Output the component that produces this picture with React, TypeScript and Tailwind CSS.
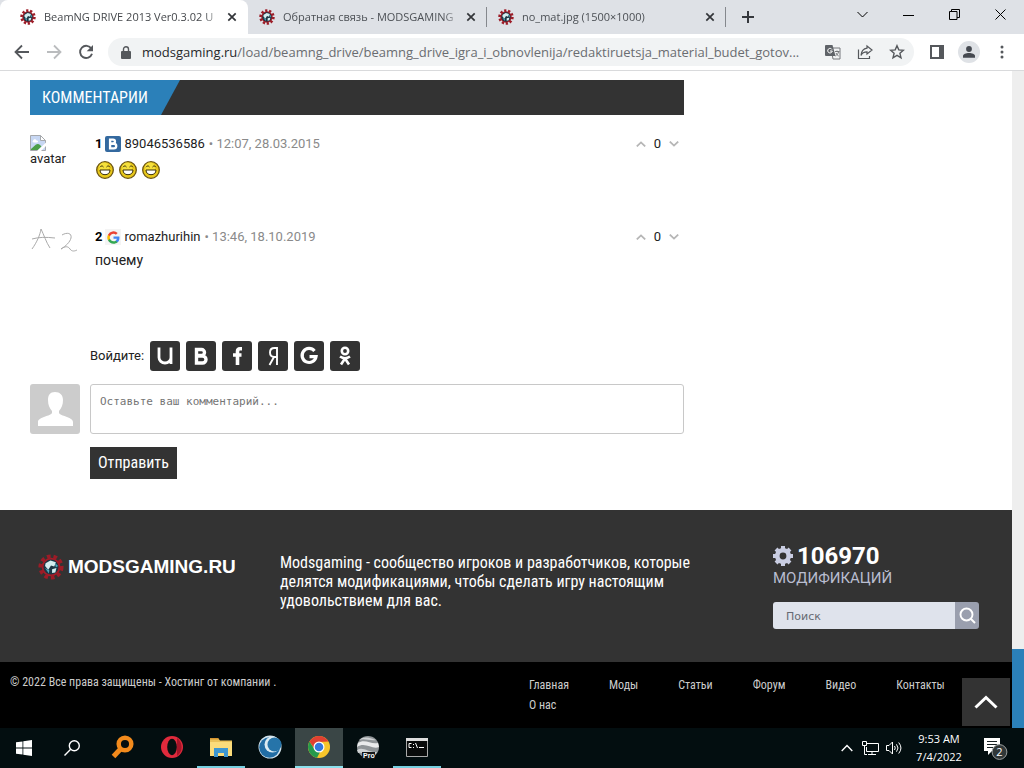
import type { ReactNode } from "react";

const condensed = "font-['Roboto_Condensed','Liberation_Sans_Narrow',sans-serif]";
const chromeFont = "font-['Open_Sans','Noto_Sans',sans-serif]";

function GearGlobe({ className }: { className: string }) {
  return (
    <svg viewBox="0 0 24 24" className={className} aria-hidden="true">
      <circle cx="12" cy="12" r="8.600" fill="#a51d29" />
      <circle cx="12" cy="12" r="9.600" fill="none" stroke="#9c1c27" strokeWidth="4" strokeDasharray="3.300 2.600" />
      <circle cx="12" cy="12" r="7" fill="#1c3644" />
      <path d="M7 8.500 11.500 6l5 1.500-1.500 4L12 10.500l-2.500 4L6.500 11zM13 14l4-1-1 4-3 .5z" fill="#d4eef0" />
      <path d="M6.500 13l4 2-.5 3zM15.500 8l3 3-2 1.500z" fill="#4aa6bb" />
    </svg>
  );
}

function CloseIcon({ className }: { className: string }) {
  return (
    <svg viewBox="0 0 10 10" className={className} aria-hidden="true">
      <path d="M1.300 1.300 8.700 8.700M8.700 1.300 1.300 8.700" stroke="currentColor" strokeWidth="1.700" />
    </svg>
  );
}

function Tab({ title, active = false }: { title: string; active?: boolean }) {
  return (
    <div
      className={
        active
          ? "flex h-[34px] w-[248px] shrink-0 items-center rounded-t-lg bg-white pr-[10px] pl-5 text-[#45484c]"
          : "flex h-[34px] w-[238px] shrink-0 items-center pr-[9px] pl-[11px] text-[#4c5055]"
      }
    >
      <GearGlobe className="size-4 shrink-0" />
      <span className="ml-2 min-w-0 flex-1 overflow-hidden text-[11px] leading-4 whitespace-nowrap [mask-image:linear-gradient(to_right,black_90%,transparent)]">
        {title}
      </span>
      <button aria-label="Закрыть вкладку" className="ml-1 shrink-0 p-[1px] text-[#333539]">
        <CloseIcon className="size-[10px]" />
      </button>
    </div>
  );
}

function BrowserBar() {
  return (
    <header className={`${chromeFont} shrink-0`}>
      <div className="flex h-[34px] items-center bg-[#dee1e6]">
        <div className="flex min-w-0 items-center overflow-hidden">
          <Tab title="BeamNG DRIVE 2013 Ver0.3.02 U" active />
          <Tab title="Обратная связь - MODSGAMING" />
          <span className="h-5 w-px shrink-0 bg-[#85888d]" />
          <Tab title="no_mat.jpg (1500×1000)" />
          <span className="h-5 w-px shrink-0 bg-[#85888d]" />
        </div>
        <button aria-label="Новая вкладка" className="ml-4 text-[#35383d]">
          <svg viewBox="0 0 12 12" className="size-3">
            <path d="M6 0v12M0 6h12" stroke="currentColor" strokeWidth="2" />
          </svg>
        </button>
        <div className="mr-[18px] mb-[6px] ml-auto flex items-center gap-[35px] text-black">
          <button aria-label="Поиск вкладок">
            <svg viewBox="0 0 11 11" className="size-[11px]">
              <path d="m.5 3 5 5 5-5" fill="none" stroke="currentColor" />
            </svg>
          </button>
          <button aria-label="Свернуть">
            <svg viewBox="0 0 11 11" className="size-[11px]">
              <path d="M0 6.500h11" stroke="currentColor" />
            </svg>
          </button>
          <button aria-label="Восстановить">
            <svg viewBox="0 0 11 11" className="size-[11px]">
              <path d="M.5 2.500h7.500v8H.5zM2.500 2.500v-2h8v8H8" fill="none" stroke="currentColor" />
            </svg>
          </button>
          <button aria-label="Закрыть">
            <svg viewBox="0 0 11 11" className="size-[11px]">
              <path d="m.5.5 10 10M10.500.5l-10 10" stroke="currentColor" />
            </svg>
          </button>
        </div>
      </div>

      <div className="flex h-[37px] items-center border-b border-[#d9dadc] bg-white pr-5 pl-[14px] text-[#55585c]">
        <button aria-label="Назад" className="mr-4">
          <svg viewBox="0 0 16 16" className="size-4">
            <path d="M15 8H2M8 1.500 1.500 8 8 14.500" fill="none" stroke="currentColor" strokeWidth="1.800" />
          </svg>
        </button>
        <button aria-label="Вперёд" className="mr-4 text-[#babcbe]">
          <svg viewBox="0 0 16 16" className="size-4">
            <path d="M1 8h13M8 1.500 14.500 8 8 14.500" fill="none" stroke="currentColor" strokeWidth="1.800" />
          </svg>
        </button>
        <button aria-label="Обновить" className="mr-[14px]">
          <svg viewBox="0 0 16 16" className="size-4">
            <path d="M13.400 4.700A6.100 6.100 0 1 0 14 9.800" fill="none" stroke="currentColor" strokeWidth="1.900" />
            <path d="M15 1v6.300H8.700z" fill="currentColor" />
          </svg>
        </button>
        <div className="flex h-7 min-w-0 flex-1 items-center rounded-full bg-[#f1f3f4] pr-[9px] pl-[13px]">
          <svg viewBox="0 0 10 13" className="h-[13px] w-[10px] shrink-0" fill="currentColor" aria-hidden="true">
            <path d="M1 5h8a1 1 0 0 1 1 1v6a1 1 0 0 1-1 1H1a1 1 0 0 1-1-1V6a1 1 0 0 1 1-1z" />
            <path d="M2.500 5.500V3.200a2.500 2.500 0 0 1 5 0v2.300" fill="none" stroke="currentColor" strokeWidth="1.400" />
          </svg>
          <span className="ml-[11px] min-w-0 flex-1 truncate text-[13px] leading-5 text-[#6a6d71]">
            <span className="text-[#26282b]">modsgaming.ru</span>
            /load/beamng_drive/beamng_drive_igra_i_obnovlenija/redaktiruetsja_material_budet_gotov...
          </span>
          <div className="ml-1 flex shrink-0 items-center gap-4">
            <button aria-label="Перевести страницу">
              <svg viewBox="0 0 16 16" className="size-4">
                <path d="M6 4h9v11H8z" fill="none" stroke="#77797c" />
                <path d="M1 1h6.500l3 11H1a1 1 0 0 1-1-1V2a1 1 0 0 1 1-1z" fill="#5f6368" />
                <path d="M7 5.500A2.300 2.300 0 1 0 7.300 7H5" fill="none" stroke="#fff" />
                <path d="M10 7.500h4.500M12 6.500v1M13.500 8c-.5 2-1.800 3-3 4M11 9c.5 1.400 1.500 2.300 2.700 3" fill="none" stroke="#77797c" />
              </svg>
            </button>
            <button aria-label="Поделиться">
              <svg viewBox="0 0 16 16" className="size-4" fill="none" stroke="currentColor" strokeWidth="1.200">
                <path d="M1.500 5.500v9h11V12" />
                <path d="M10 2l5 4-5 4V7.800C7 7.800 5 9 4 11.500 4.300 7.500 6.500 4.700 10 4.200z" />
              </svg>
            </button>
            <button aria-label="Добавить в закладки">
              <svg viewBox="0 0 16 16" className="size-4" fill="none" stroke="currentColor" strokeWidth="1.400">
                <path d="m8 1.700 1.800 4.200 4.600.4-3.500 3 1.100 4.500L8 11.400l-4 2.400 1.100-4.500-3.500-3 4.600-.4z" />
              </svg>
            </button>
          </div>
        </div>
        <div className="ml-4 flex shrink-0 items-center">
          <button aria-label="Боковая панель">
            <svg viewBox="0 0 14 14" className="size-[14px]">
              <path d="M1 1h12v12H1z" fill="none" stroke="currentColor" strokeWidth="2" />
              <path d="M9 0h5v14H9z" fill="currentColor" />
            </svg>
          </button>
          <button aria-label="Профиль" className="ml-[14px] flex size-[22px] items-center justify-center rounded-full bg-[#dfe2e6]">
            <svg viewBox="0 0 12 12" className="size-3" fill="#454950">
              <circle cx="6" cy="3" r="2.900" />
              <path d="M0 11.800V10c0-2 3-3 6-3s6 1 6 3v1.800z" />
            </svg>
          </button>
          <button aria-label="Меню" className="ml-[20px]">
            <svg viewBox="0 0 4 14" className="h-[14px] w-1" fill="currentColor">
              <circle cx="2" cy="2" r="1.500" />
              <circle cx="2" cy="7" r="1.500" />
              <circle cx="2" cy="12" r="1.500" />
            </svg>
          </button>
        </div>
      </div>
    </header>
  );
}

function GoogleLogo({ className }: { className: string }) {
  return (
    <svg viewBox="0 0 24 24" className={className} aria-hidden="true">
      <path fill="#4285f4" d="M23 12.300c0-.8-.1-1.600-.2-2.300H12v4.500h6.200a5.300 5.300 0 0 1-2.300 3.500v2.900h3.700c2.200-2 3.400-5 3.400-8.600z" />
      <path fill="#34a853" d="M12 23.500c3.100 0 5.700-1 7.600-2.800l-3.700-2.900c-1 .7-2.300 1.100-3.900 1.100-3 0-5.500-2-6.400-4.700H1.800v3A11.500 11.500 0 0 0 12 23.500z" />
      <path fill="#fbbc05" d="M5.600 14.200a6.900 6.900 0 0 1 0-4.400v-3H1.800a11.500 11.500 0 0 0 0 10.400z" />
      <path fill="#ea4335" d="M12 5.100c1.700 0 3.200.6 4.400 1.700l3.300-3.300A11.500 11.500 0 0 0 1.800 6.800l3.800 3C6.500 7.100 9 5.100 12 5.100z" />
    </svg>
  );
}

function Smiley() {
  return (
    <svg viewBox="0 0 18 18" className="size-[18px]" role="img" aria-label="smile">
      <circle cx="9" cy="9" r="8.300" fill="#e8c81a" stroke="#6b5410" strokeWidth="1.300" />
      <circle cx="8" cy="6.500" r="5" fill="#fbe94c" opacity=".7" />
      <path d="M4 6.200C5 4.600 6.500 4.600 7.500 6M10.500 6c1-1.400 2.500-1.400 3.500.2" fill="none" stroke="#3b300a" />
      <path d="M4 9h10c0 3-2 4.700-5 4.700S4 12 4 9z" fill="#fff" stroke="#3b300a" />
    </svg>
  );
}

function Votes() {
  return (
    <div className="flex shrink-0 items-center gap-2 pr-[5px] text-[13px] leading-5 text-[#222]">
      <button aria-label="Нравится" className="text-[#b6b6b6]">
        <svg viewBox="0 0 10 6" className="h-[6px] w-[10px]"><path d="m.8 5.400 4.200-4 4.200 4" fill="none" stroke="currentColor" strokeWidth="1.800" /></svg>
      </button>
      <span>0</span>
      <button aria-label="Не нравится" className="text-[#b6b6b6]">
        <svg viewBox="0 0 10 6" className="h-[6px] w-[10px]"><path d="m.8.6 4.200 4 4.200-4" fill="none" stroke="currentColor" strokeWidth="1.800" /></svg>
      </button>
    </div>
  );
}

type CommentProps = { index: number; badge: ReactNode; name: string; date: string; avatar: ReactNode; children: ReactNode };

function Comment({ index, badge, name, date, avatar, children }: CommentProps) {
  return (
    <article className="flex h-[93px] items-start">
      <div className="w-[65px] shrink-0">{avatar}</div>
      <div className="min-w-0 flex-1">
        <div className="flex items-center text-[13px] leading-5">
          <b className="font-bold text-black">{index}</b>
          <span className="mx-[3px]">{badge}</span>
          <a href="#user" className="text-[#1d1d1d]">{name}</a>
          <span className="ml-1 text-[#8a8a8a]">• {date}</span>
        </div>
        {children}
      </div>
      <Votes />
    </article>
  );
}

const socials: { name: string; icon: ReactNode }[] = [
  { name: "uID", icon: <path d="M6 3.500v10a6 5.500 0 0 0 12 0v-10M18 12v8" strokeWidth="2.800" /> },
  { name: "ВКонтакте", icon: <path d="M7.500 5.500h5a3 3 0 0 1 0 6h-5zM7.500 12h6a3.500 3.500 0 0 1 0 7h-6z" strokeWidth="3.400" /> },
  { name: "Facebook", icon: <path d="M17 4.700h-2q-2.500 0-2.500 2.800v13.500M8 11h8.500" strokeWidth="3.600" /> },
  { name: "Яндекс", icon: <path d="M16 21V4h-2.500c-3 0-4.500 1.700-4.500 4.500s1.600 4.500 4.500 4.500H16M13 13l-4.500 8" strokeWidth="1.900" /> },
  { name: "Google", icon: <path d="M17.500 7A7 7 0 1 0 19 12.700h-6.500" strokeWidth="3.200" /> },
  {
    name: "Одноклассники",
    icon: (
      <>
        <circle cx="12" cy="7" r="3.200" />
        <path d="M7 12.500q5 3.500 10 0M12 14.500l-4 6M12 14.500l4 6" />
      </>
    ),
  },
];

function Comments() {
  return (
    <main className="flex-1 px-[30px] pt-[9px] pb-[31px] font-['Roboto',sans-serif]">
      <div className="max-w-[654px]">
        <div className="bg-[#333]">
          <h2 className={`${condensed} h-[35px] w-[150px] bg-[#2b80b9] pl-3 text-[16px] leading-[35px] text-white [clip-path:polygon(0_0,100%_0,131px_100%,0_100%)]`}>
            КОММЕНТАРИИ
          </h2>
        </div>
        <div className="pt-[19px]">
          <Comment
            index={1}
            name="89046536586"
            date="12:07, 28.03.2015"
            badge={
              <span className="flex size-4 items-center justify-center rounded-[2px] bg-[#34699f]">
                <svg viewBox="0 0 24 24" className="size-[14px]" fill="none" stroke="#fff" strokeWidth="4" aria-hidden="true">
                  <path d="M7 4.500h5a3.300 3.300 0 0 1 0 6.700H7zM7 11.500h6.500a4 4 0 0 1 0 8H7z" />
                </svg>
              </span>
            }
            avatar={
              <div className="pt-px">
                <svg viewBox="0 0 16 16" className="size-4" aria-hidden="true">
                  <path d="M.5.5h10l5 5v10H.5z" fill="#c7d7f3" stroke="#a6a9ad" />
                  <path d="M10.500.5v5h5z" fill="#fff" stroke="#a6a9ad" />
                  <path d="M3 6c0-2 3-2.500 3.500-.5 2-.3 2 2 .5 2H4C2.500 7.500 2 6.500 3 6z" fill="#fff" />
                  <path d="M1 15v-1l5-4.500c1.500-1 3-.5 4 .5l1.500 1.500L8 15z" fill="#4b9f48" />
                  <path d="M7 16 16 7.500V11l-5 5z" fill="#fff" />
                </svg>
                <p className="text-[13px] leading-4 text-[#222]">avatar</p>
              </div>
            }
          >
            <div className="mt-[7px] flex gap-[5px] pl-px">
              <Smiley />
              <Smiley />
              <Smiley />
            </div>
          </Comment>
          <Comment
            index={2}
            name="romazhurihin"
            date="13:46, 18.10.2019"
            badge={<span className="flex size-4 items-center justify-center bg-[#f4f4f4]"><GoogleLogo className="size-[13px]" /></span>}
            avatar={
              <svg viewBox="0 0 50 26" className="h-[26px] w-[50px]" fill="none" stroke="#aaa" role="img" aria-label="avatar">
                <path d="M2 22C7 15 10 8 11 2c3 6 5 13 9 19M2 12c7-2 14-2 23-1M32 8c5-3 10-2 9 3-1 4-5 8-10 11 4-3 7-3 9 0 2 3 5 2 7 1" />
              </svg>
            }
          >
            <p className="mt-[3px] text-[14px] leading-5 text-[#222]">почему</p>
          </Comment>
        </div>

        <div className="mt-[21px] ml-[60px] flex items-center gap-[6px]">
          <span className="text-[13px] leading-5 text-[#222]">Войдите:</span>
          {socials.map((s) => (
            <a key={s.name} href="#login" aria-label={s.name} className="flex size-[30px] items-center justify-center rounded-[3px] bg-[#333]">
              <svg viewBox="0 0 24 24" className="size-6" fill="none" stroke="#fff" strokeWidth="2.600">
                {s.icon}
              </svg>
            </a>
          ))}
        </div>
        <form className="mt-[13px] flex items-start gap-[10px]">
          <svg viewBox="0 0 50 50" className="size-[50px] shrink-0 rounded-[3px] bg-[#ccc]" fill="#fff" aria-hidden="true">
            <path d="M25 8c5 0 8 3 8 8 0 5-1.500 8-4 11v2c1 3 14 4 14 9v4H8v-4c0-5 13-6 14-9v-2c-2.500-3-4-6-4-11 0-5 2-8 7-8z" />
          </svg>
          <div className="min-w-0 flex-1">
            <label htmlFor="comment" className="sr-only">Комментарий</label>
            <textarea
              id="comment"
              placeholder="Оставьте ваш комментарий..."
              className="block h-[50px] w-full resize-none rounded-[3px] border border-[#c8c8c8] px-[9px] py-[9px] font-['DejaVu_Sans_Mono',monospace] text-[11px] leading-4 placeholder:text-[#757575]"
            />
            <button type="button" className={`${condensed} mt-[13px] h-8 bg-[#333] px-2 text-[16px] leading-8 text-white`}>
              Отправить
            </button>
          </div>
        </form>
      </div>
    </main>
  );
}

const links = ["Главная", "Моды", "Статьи", "Форум", "Видео", "Контакты", "О нас"];

function Footer() {
  return (
    <footer className={`${condensed} relative`}>
      <div className="flex h-[152px] items-start bg-[#333] pr-[33px] pl-[38px] text-white">
        <a href="#home" className="mt-[43px] flex w-[242px] shrink-0 items-center gap-1 font-['Liberation_Sans',sans-serif] text-[19px] leading-7 font-bold">
          <GearGlobe className="size-[26px]" />
          MODSGAMING.RU
        </a>
        <p className="mt-[43px] max-w-[424px] flex-1 text-[16px] leading-[19px]">
          Modsgaming - сообщество игроков и разработчиков, которые делятся модификациями, чтобы сделать игру настоящим удовольствием для вас.
        </p>
        <div className="mt-[33px] ml-auto w-[206px] shrink-0 font-['Roboto',sans-serif]">
          <div className="flex items-center gap-1 text-[24px] leading-[26px] font-bold">
            <svg viewBox="0 0 20 20" className="size-5" aria-hidden="true">
              <circle cx="10" cy="10" r="5.700" fill="none" stroke="#c9cde2" strokeWidth="4.600" />
              <path d="M10 0v4M10 16v4M0 10h4M16 10h4M3 3l3 3M14 14l3 3M17 3l-3 3M6 14l-3 3" stroke="#c9cde2" strokeWidth="4" />
            </svg>
            106970
          </div>
          <p className="text-[15px] leading-[18px] text-[#b9bdd0]">МОДИФИКАЦИЙ</p>
          <form className="mt-[15px] flex h-[27px] overflow-hidden rounded-[3px]">
            <input
              type="search"
              aria-label="Поиск"
              placeholder="Поиск"
              className="min-w-0 flex-1 bg-[#dfe3ec] px-[13px] pt-[3px] font-['DejaVu_Sans',sans-serif] text-[11px] text-[#555] placeholder:text-[#666a72]"
            />
            <button type="button" aria-label="Найти" className="flex w-6 items-center justify-center bg-[#9a9fae]">
              <svg viewBox="0 0 17 17" className="size-[17px]" fill="none" stroke="#fff" strokeWidth="1.900">
                <circle cx="7.500" cy="7.500" r="6" />
                <path d="m12 12 4 4" />
              </svg>
            </button>
          </form>
        </div>
      </div>
      <div className="flex h-[66px] justify-between bg-black pl-[10px] text-[12px] text-[#ccc]">
        <p className="pt-[10px] leading-5">© 2022 Все права защищены - Хостинг от компании .</p>
        <nav className="flex w-[483px] flex-wrap content-start gap-x-10 pt-[13px] pr-[62px] leading-5">
          {links.map((l) => (
            <a key={l} href="#page">{l}</a>
          ))}
        </nav>
      </div>
      <button aria-label="Наверх" className="absolute right-[2px] bottom-[2px] flex size-12 items-center justify-center bg-[#333]">
        <svg viewBox="0 0 24 14" className="h-[14px] w-6" fill="none" stroke="#fff" strokeWidth="3">
          <path d="M1.500 12.500 12 2.500l10.500 10" />
        </svg>
      </button>
    </footer>
  );
}

const apps: { name: string; state: string; icon: ReactNode }[] = [
  {
    name: "Поиск файлов",
    state: "border-transparent",
    icon: (
      <g fill="none" stroke="#f28a1c">
        <circle cx="14" cy="9" r="6.300" strokeWidth="4.500" />
        <path d="m9.500 14-7 7.500" strokeWidth="5" />
      </g>
    ),
  },
  {
    name: "Opera",
    state: "border-transparent",
    icon: (
      <>
        <circle cx="12" cy="12" r="11" fill="#e02a3c" />
        <path d="M17 3a11 11 0 0 1 0 18z" fill="#a51528" />
        <ellipse cx="12" cy="12" rx="4.800" ry="8.300" fill="#061010" />
      </>
    ),
  },
  {
    name: "Проводник",
    state: "border-[#76cfe0]",
    icon: (
      <>
        <path d="M1 3h8l2 2.500h12V21H1z" fill="#ebc25a" />
        <path d="M1 7h22v14H1z" fill="#fbdc7b" />
        <path d="M5 13h14v9h-4v-4H9v4H5z" fill="#3e97d1" />
        <path d="M1 3h8l1 1.500H1z" fill="#d69530" />
      </>
    ),
  },
  {
    name: "Браузер",
    state: "border-transparent",
    icon: (
      <>
        <circle cx="12" cy="12" r="11.500" fill="#d4e4ed" />
        <circle cx="11.500" cy="12.500" r="10.300" fill="#226da4" />
        <circle cx="14.500" cy="9.500" r="8" fill="#dcebf2" />
        <circle cx="16.500" cy="9.500" r="7" fill="#2674a9" />
      </>
    ),
  },
  {
    name: "Google Chrome",
    state: "border-[#8be0ec] bg-[#3a4646]",
    icon: (
      <>
        <circle cx="12" cy="12" r="11" fill="#f7c52b" />
        <path d="M2.500 6.500 7.700 14.500l5.300 2.500-3 5.800A11 11 0 0 1 2.500 6.500z" fill="#259a4c" />
        <path d="M2.500 6.500A11 11 0 0 1 21.500 6.500L12 7l-5 6z" fill="#df4032" />
        <circle cx="12" cy="12" r="5.500" fill="#fff" />
        <circle cx="12" cy="12" r="4.300" fill="#3478df" />
      </>
    ),
  },
  {
    name: "Google Earth Pro",
    state: "border-transparent",
    icon: (
      <>
        <circle cx="12" cy="12" r="11" fill="#8f9497" />
        <path d="M2 8c7-5 13 2 20 0l1 4C16 15 9 6 1 12z" fill="#e9eaeb" />
        <path d="M3 5C9 0 16 4 20 5c-6 1-12-2-17 0zM1 15c6-4 12 3 20 2l-3 4c-5 0-9-4-16-3z" fill="#cfd2d4" />
        <path d="M6 17h13v7H6z" fill="#151719" />
        <text x="7" y="23" fill="#fff" fontSize="7" fontFamily="Liberation Sans" fontWeight="bold">Pro</text>
      </>
    ),
  },
  {
    name: "Командная строка",
    state: "border-[#76cfe0]",
    icon: (
      <>
        <path d="M1.500 3.500h21v18h-21z" fill="#090b0b" stroke="#aaa" />
        <path d="M1 3h22v3H1z" fill="#ddd" />
        <path d="M6.500 8.500H4v4h2.500M8.500 9v1M8.500 12v1M10.500 8l2 5M14 12.500h5" fill="none" stroke="#fff" />
      </>
    ),
  },
];

function Taskbar() {
  return (
    <footer className={`${chromeFont} flex h-10 shrink-0 items-center bg-[#030e10] text-white`}>
      <button aria-label="Пуск" className="flex h-full w-12 items-center justify-center">
        <svg viewBox="0 0 16 16" className="size-4" fill="#fff">
          <path d="m0 2.300 6.500-.9v6.200H0zM7.300 1.300 16 0v7.600H7.300zM0 8.400h6.500v6.200L0 13.700zM7.300 8.400H16V16l-8.700-1.200z" />
        </svg>
      </button>
      <button aria-label="Поиск" className="flex h-full w-12 items-center justify-center">
        <svg viewBox="0 0 18 18" className="size-[18px]" fill="none" stroke="#fff" strokeWidth="1.400">
          <circle cx="11.300" cy="6.700" r="5" />
          <path d="M7.700 10.300 1.500 16.500" />
        </svg>
      </button>
      <div className="ml-[3px] flex h-full gap-px">
        {apps.map((a) => (
          <button key={a.name} aria-label={a.name} className={`flex w-12 items-center justify-center border-b-2 ${a.state}`}>
            <svg viewBox="0 0 24 24" className="size-6">{a.icon}</svg>
          </button>
        ))}
      </div>
      <div className="ml-auto flex items-center pr-4">
        <button aria-label="Скрытые значки" className="mr-[9px]">
          <svg viewBox="0 0 12 8" className="h-2 w-3" fill="none" stroke="#fff" strokeWidth="1.400"><path d="m.7 7 5.300-5.500L11.300 7" /></svg>
        </button>
        <button aria-label="Сеть" className="mr-[7px]">
          <svg viewBox="0 0 17 14" className="h-[14px] w-[17px]" fill="none" stroke="#fff">
            <path d="M5 2.500h11.500v8H4.500V6M10 10.500v3M6 13.500h8M.5.500h4v4h-4zM2.500 4.500v9H5" />
          </svg>
        </button>
        <button aria-label="Громкость" className="mr-3">
          <svg viewBox="0 0 16 14" className="h-[14px] w-4" fill="none" stroke="#fff">
            <path d="M.5 4.500H3l3.500-3.500v12L3 9.500H.5zM8.500 5q1.500 2 0 4M10.500 3.300q3 3.700 0 7.400M12.700 1.500q4.500 5.500 0 11" />
          </svg>
        </button>
        <div className="w-[50px] text-center text-[11px] leading-[18px] whitespace-nowrap">
          <p>9:53 AM</p>
          <p>7/4/2022</p>
        </div>
        <button aria-label="Уведомления" className="ml-5">
          <svg viewBox="0 0 24 24" className="size-6">
            <path d="M0 2h16v13H8l-4 4v-4H0z" fill="#fff" />
            <path d="M3 5.500h10M3 8.500h10M3 11.500h6" stroke="#182224" />
            <circle cx="15.500" cy="16" r="7.400" fill="#303738" stroke="#9b9f9f" />
            <text x="15.500" y="20" textAnchor="middle" fill="#fff" fontSize="11" fontFamily="Open Sans">2</text>
          </svg>
        </button>
      </div>
    </footer>
  );
}

export default function App() {
  return (
    <div className="flex min-h-screen flex-col bg-white">
      <BrowserBar />
      <div className="flex flex-1">
        <div className="flex min-w-0 flex-1 flex-col">
          <Comments />
          <Footer />
        </div>
        <div className="flex w-3 shrink-0 flex-col justify-end bg-[#eee]">
          <div className="h-[79px] bg-[#2b80b9]" />
        </div>
      </div>
      <Taskbar />
    </div>
  );
}
